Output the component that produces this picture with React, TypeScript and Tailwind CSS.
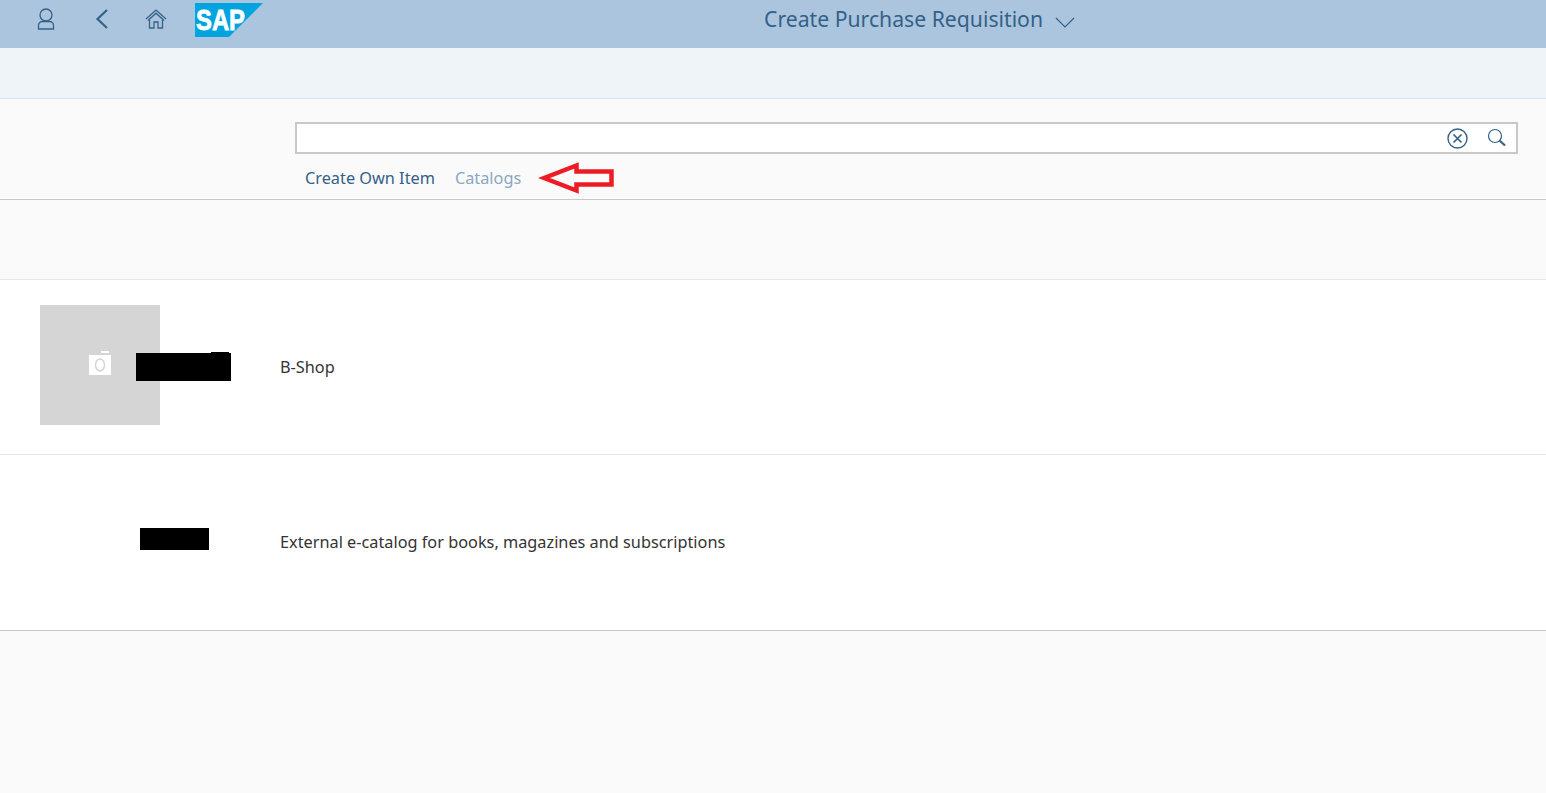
function UserIcon() {
  return (
    <svg width="18" height="22" viewBox="0 0 18 22" fill="none" stroke="#346187" strokeWidth="1.3">
      <ellipse cx="9" cy="7" rx="6" ry="6" />
      <path d="M1.5 21v-3.5c0-2.5 2-4 4-4h7c2 0 4 1.500 4 4V21z" />
    </svg>
  );
}

function BackIcon() {
  return (
    <svg width="14" height="20" viewBox="0 0 14 20" fill="none" stroke="#346187" strokeWidth="2.2">
      <path d="M12 1 2.500 10l9.500 9" />
    </svg>
  );
}

function HomeIcon() {
  return (
    <svg width="22" height="20" viewBox="0 0 22 20" fill="none" stroke="#346187" strokeWidth="1.3">
      <path d="M1 10 11 1l10 9" />
      <path d="M3 11.500 11 4.200l8 7.300" />
      <path d="M4.500 11v8h4.500v-6h4v6h4.500v-8" />
    </svg>
  );
}

function SapLogo() {
  return (
    <svg width="68" height="34" viewBox="0 0 68 34">
      <path d="M0 0h68L34 34H0z" fill="#00a5e0" />
      <text
        x="1"
        y="27"
        fill="#ffffff"
        stroke="#ffffff"
        strokeWidth="0.8"
        fontSize="29"
        fontWeight="700"
        fontFamily="'Liberation Sans', sans-serif"
        textLength="49"
        lengthAdjust="spacingAndGlyphs"
      >
        SAP
      </text>
    </svg>
  );
}

function TitleChevron() {
  return (
    <svg width="20" height="11" viewBox="0 0 20 11" fill="none" stroke="#346187" strokeWidth="1.2">
      <path d="m1 1 9 9 9-9" />
    </svg>
  );
}

function ClearIcon() {
  return (
    <svg width="21" height="21" viewBox="0 0 21 21" fill="none" stroke="#346187" strokeWidth="1.4">
      <circle cx="10.500" cy="10.500" r="9.500" />
      <path d="m6.500 6.500 8 8M14.500 6.500l-8 8" strokeWidth="1.7" />
    </svg>
  );
}

function SearchIcon() {
  return (
    <svg width="20" height="20" viewBox="0 0 20 20" fill="none" stroke="#346187">
      <circle cx="8" cy="8" r="6.500" strokeWidth="1.200" />
      <path d="m12.500 12.500 5.500 5" strokeWidth="2.200" />
    </svg>
  );
}

function RedArrow() {
  return (
    <svg width="76" height="32" viewBox="0 0 76 32" fill="none" stroke="#ed1c24" strokeWidth="4.500">
      <path d="M6 16 38.500 3.500v6h35v13h-35v6z" />
    </svg>
  );
}

function CameraIcon() {
  return (
    <svg width="22" height="24" viewBox="0 0 22 24" className="mb-1">
      <path d="M12 0h8v2h-8z" fill="#ffffff" />
      <path d="M0 4h22v20H0z" fill="#ffffff" />
      <ellipse cx="11" cy="14" rx="4.500" ry="6" fill="none" stroke="#d5d5d5" strokeWidth="1.500" />
    </svg>
  );
}

export default function App() {
  return (
    <div className="min-h-[793px] bg-[#fafafa] font-['Noto_Sans',sans-serif] overflow-hidden">
      <header className="h-12 bg-[#abc5df] flex items-start text-[#346187]">
        <div className="ml-[37px] mt-[8px]">
          <UserIcon />
        </div>
        <div className="ml-[40px] mt-[9px]">
          <BackIcon />
        </div>
        <div className="ml-[36px] mt-[9px]">
          <HomeIcon />
        </div>
        <div className="ml-[28px] mt-[3px]">
          <SapLogo />
        </div>
        <span className="ml-[501px] mt-[7px] text-[21.2px] leading-6">Create Purchase Requisition</span>
        <div className="ml-[12px] mt-[17px]">
          <TitleChevron />
        </div>
      </header>

      <div className="h-[51px] bg-[#eff4f8] border-b border-[#d8e4ef]" />

      <section className="h-[101px] border-b border-[#c8c8c8] pl-[295px] pr-[28px] pt-[23px]">
        <div className="h-[32px] bg-white border-2 border-[#c8c8c8] flex items-center justify-end">
          <ClearIcon />
          <div className="ml-[19px] mr-[9px]">
            <SearchIcon />
          </div>
        </div>
        <nav className="flex items-center mt-[8px] ml-[10px] text-[16.3px] leading-6">
          <span className="text-[#346187]">Create Own Item</span>
          <span className="ml-5 text-[#8ba7c1]">Catalogs</span>
          <div className="ml-[17px]">
            <RedArrow />
          </div>
        </nav>
      </section>

      <div className="h-[80px] border-b border-[#e5e5e5]" />

      <div className="h-[175px] bg-white border-b border-[#e5e5e5] flex items-center relative">
        <div className="ml-10 w-[120px] h-[120px] mb-[4px] bg-[#d5d5d5] flex items-center justify-center">
          <CameraIcon />
        </div>
        <span className="ml-[120px] text-[16.3px] text-[#333333]">B-Shop</span>
        <div className="absolute left-[136px] top-[73px] w-[95px] h-[28px] bg-black" />
        <div className="absolute left-[211px] top-[72px] w-[18px] h-[2px] bg-black" />
      </div>

      <div className="h-[176px] bg-white border-b border-[#c8c8c8] flex items-center relative">
        <span className="ml-[280px] mb-[1px] text-[16.3px] text-[#333333]">External e-catalog for books, magazines and subscriptions</span>
        <div className="absolute left-[140px] top-[73px] w-[69px] h-[22px] bg-black" />
      </div>
    </div>
  );
}
